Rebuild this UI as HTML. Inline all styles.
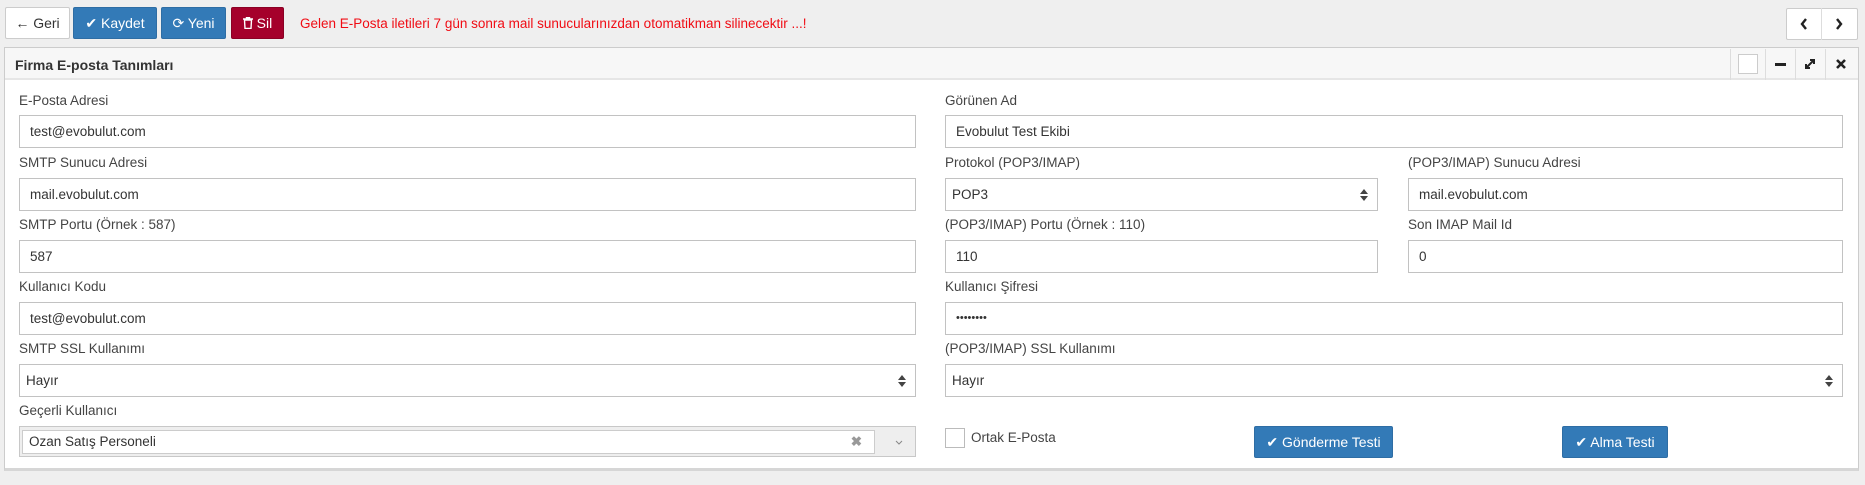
<!DOCTYPE html>
<html><head><meta charset="utf-8"><style>
*{box-sizing:border-box;margin:0;padding:0}
body{width:1865px;height:485px;background:#efefef;font-family:"Liberation Sans",sans-serif;font-size:14px;color:#333;position:relative;overflow:hidden}
.a{position:absolute}
.btn{position:absolute;top:7px;height:32px;border-radius:2px;font-size:14px;line-height:30px;text-align:center;color:#fff}
.lbl{position:absolute;font-size:13.5px;color:#444;line-height:16px}
.inp{position:absolute;height:33px;border:1px solid #c2c2c2;background:#fff;font-size:13.5px;line-height:31px;padding-left:10px;color:#333}
.sel{padding-left:6px}
.arr{position:absolute;right:9px;top:9px;width:8px;height:14px}
.hb{position:absolute;top:49px;height:31px;border-left:1px solid #ddd}
</style></head><body>
<div class="btn" style="left:5px;width:65px;background:#fff;border:1px solid #ccc;color:#333"><b>←</b> Geri</div>
<div class="btn" style="left:73px;width:84px;background:#337ab7;border:1px solid #2e6da4">✔ Kaydet</div>
<div class="btn" style="left:161px;width:65px;background:#337ab7;border:1px solid #2e6da4">⟳ Yeni</div>
<div class="btn" style="left:231px;width:53px;background:#a5002b;border:1px solid #8b0024"><svg width="10" height="12" viewBox="0 0 10 12" style="vertical-align:-1px"><path d="M0 2H10M3.5 2V0.5H6.5V2M1.5 3L2 11.5H8L8.5 3Z" stroke="#fff" stroke-width="1.4" fill="none"/></svg> Sil</div>
<div class="a" style="left:300px;top:15px;color:#f00c14;font-size:13.5px;line-height:18px">Gelen E-Posta iletileri 7 gün sonra mail sunucularınızdan otomatikman silinecektir ...!</div>
<div class="a" style="left:1786px;top:8px;width:72px;height:32px;background:#fff;border:1px solid #ccc;border-radius:2px"></div>
<div class="a" style="left:1821px;top:8px;height:32px;border-left:1px solid #ddd"></div>
<svg class="a" style="left:1800px;top:18px" width="8" height="12" viewBox="0 0 8 12"><path d="M6 1L2 6L6 11" stroke="#222" stroke-width="2.4" fill="none"/></svg>
<svg class="a" style="left:1835px;top:18px" width="8" height="12" viewBox="0 0 8 12"><path d="M2 1L6 6L2 11" stroke="#222" stroke-width="2.4" fill="none"/></svg>

<div class="a" style="left:4px;top:47px;width:1855px;height:424px;background:#fff;border:1px solid #ccc;border-bottom:3px solid #d6d6d6"></div>
<div class="a" style="left:5px;top:48px;width:1853px;height:32px;background:#f7f7f7;border-bottom:2px solid #e6e6e6"></div>
<div class="a" style="left:15px;top:57px;font-weight:bold;font-size:14px;color:#333">Firma E-posta Tanımları</div>
<div class="hb" style="left:1730px"></div><div class="hb" style="left:1765px"></div><div class="hb" style="left:1795px"></div><div class="hb" style="left:1825px"></div>
<div class="a" style="left:1738px;top:54px;width:20px;height:20px;border:1px solid #ccc;background:#fff"></div>
<div class="a" style="left:1775px;top:63px;width:11px;height:3px;background:#222"></div>
<svg class="a" style="left:1804px;top:58px" width="12" height="12" viewBox="0 0 12 12"><path d="M2 10L10 2M6 2H10V6M2 6V10H6" stroke="#222" stroke-width="2" fill="none"/></svg>
<svg class="a" style="left:1836px;top:59px" width="10" height="10" viewBox="0 0 10 10"><path d="M1 1L9 9M9 1L1 9" stroke="#222" stroke-width="2.6"/></svg>

<div class="lbl" style="left:19px;top:93px">E-Posta Adresi</div>
<div class="inp" style="left:19px;top:115px;width:897px">test@evobulut.com</div>
<div class="lbl" style="left:945px;top:93px">Görünen Ad</div>
<div class="inp" style="left:945px;top:115px;width:898px">Evobulut Test Ekibi</div>

<div class="lbl" style="left:19px;top:155px">SMTP Sunucu Adresi</div>
<div class="inp" style="left:19px;top:178px;width:897px">mail.evobulut.com</div>
<div class="lbl" style="left:945px;top:155px">Protokol (POP3/IMAP)</div>
<div class="inp sel" style="left:945px;top:178px;width:433px">POP3<svg class="arr" viewBox="0 0 8 14"><path d="M0 6L4 1L8 6ZM0 8L4 13L8 8Z" fill="#444"/></svg></div>
<div class="lbl" style="left:1408px;top:155px">(POP3/IMAP) Sunucu Adresi</div>
<div class="inp" style="left:1408px;top:178px;width:435px">mail.evobulut.com</div>

<div class="lbl" style="left:19px;top:217px">SMTP Portu (Örnek : 587)</div>
<div class="inp" style="left:19px;top:240px;width:897px">587</div>
<div class="lbl" style="left:945px;top:217px">(POP3/IMAP) Portu (Örnek : 110)</div>
<div class="inp" style="left:945px;top:240px;width:433px">110</div>
<div class="lbl" style="left:1408px;top:217px">Son IMAP Mail Id</div>
<div class="inp" style="left:1408px;top:240px;width:435px">0</div>

<div class="lbl" style="left:19px;top:279px">Kullanıcı Kodu</div>
<div class="inp" style="left:19px;top:302px;width:897px">test@evobulut.com</div>
<div class="lbl" style="left:945px;top:279px">Kullanıcı Şifresi</div>
<div class="inp" style="left:945px;top:302px;width:898px;font-size:11px">••••••••</div>

<div class="lbl" style="left:19px;top:341px">SMTP SSL Kullanımı</div>
<div class="inp sel" style="left:19px;top:364px;width:897px">Hayır<svg class="arr" viewBox="0 0 8 14"><path d="M0 6L4 1L8 6ZM0 8L4 13L8 8Z" fill="#444"/></svg></div>
<div class="lbl" style="left:945px;top:341px">(POP3/IMAP) SSL Kullanımı</div>
<div class="inp sel" style="left:945px;top:364px;width:898px">Hayır<svg class="arr" viewBox="0 0 8 14"><path d="M0 6L4 1L8 6ZM0 8L4 13L8 8Z" fill="#444"/></svg></div>

<div class="lbl" style="left:19px;top:403px">Geçerli Kullanıcı</div>
<div class="a" style="left:19px;top:426px;width:897px;height:31px;border:1px solid #c8c8c8;background:#eee"></div>
<div class="a" style="left:22px;top:430px;width:853px;height:24px;border:1px solid #ccc;background:#fff;font-size:13.5px;line-height:22px;padding-left:6px">Ozan Satış Personeli<span style="position:absolute;right:12px;color:#999;font-weight:bold">✖</span></div>
<svg class="a" style="left:895px;top:440px" width="8" height="5" viewBox="0 0 8 5"><path d="M1 1L4 4L7 1" stroke="#888" stroke-width="1" fill="none"/></svg>
<div class="a" style="left:945px;top:428px;width:20px;height:20px;border:1px solid #bbb;background:#fff"></div>
<div class="a" style="left:971px;top:430px;font-size:13.5px;color:#444">Ortak E-Posta</div>
<div class="a" style="left:1254px;top:426px;width:139px;height:32px;background:#337ab7;border:1px solid #2e6da4;border-radius:2px;color:#fff;text-align:center;line-height:30px;font-size:14px">✔ Gönderme Testi</div>
<div class="a" style="left:1562px;top:426px;width:106px;height:32px;background:#337ab7;border:1px solid #2e6da4;border-radius:2px;color:#fff;text-align:center;line-height:30px;font-size:14px">✔ Alma Testi</div>
</body></html>
